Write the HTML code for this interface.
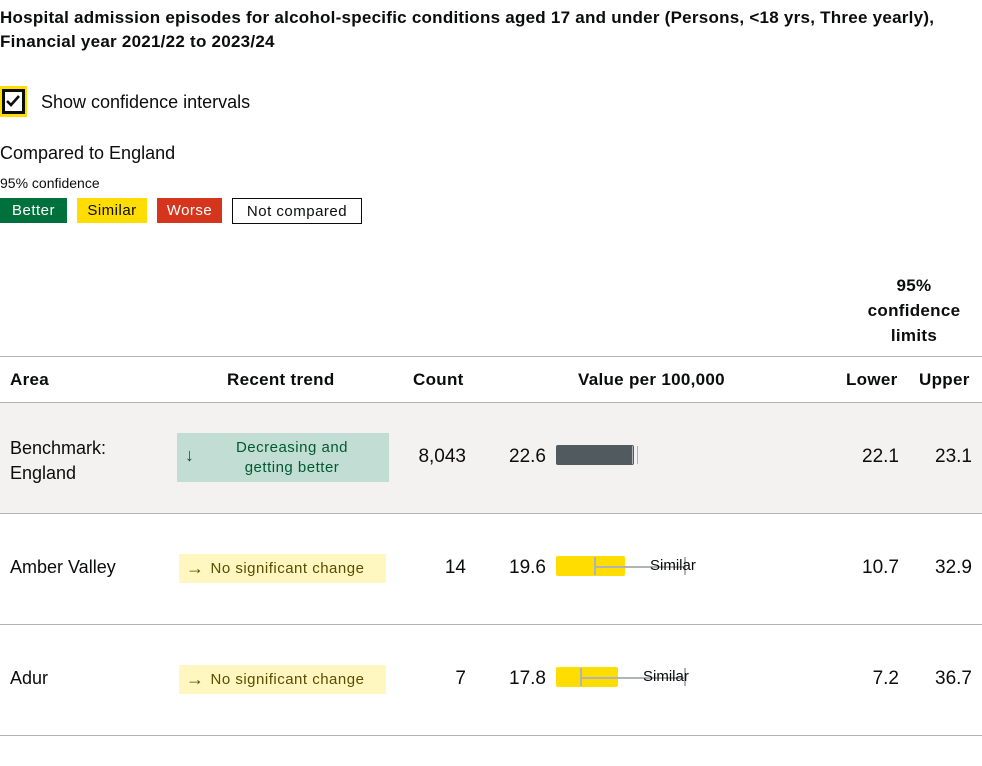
<!DOCTYPE html>
<html><head><meta charset="utf-8"><style>
body{margin:0;width:982px;height:766px;background:#fff;font-family:"Liberation Sans",Arial,sans-serif;color:#0b0c0c;position:relative;overflow:hidden}
.a{position:absolute;white-space:nowrap}
.line{position:absolute;left:0;width:982px;height:1px;background:#b1b4b6}
.tag{position:absolute;font-size:15px;letter-spacing:.5px;display:flex;align-items:center}
.r{text-align:right}
.h{font-weight:bold;font-size:17px;letter-spacing:.3px}
.n{font-size:19px}
.ar{font-size:18px;margin-right:6px}
</style></head><body>
<div class="a" style="left:0;top:6px;font-weight:bold;font-size:17px;line-height:24px;letter-spacing:.25px">Hospital admission episodes for alcohol-specific conditions aged 17 and under (Persons, &lt;18 yrs, Three yearly),<br>Financial year 2021/22 to 2023/24</div>
<div class="a" style="left:0;top:86px;width:27px;height:31px;background:#ffdd00"></div>
<div class="a" style="left:2px;top:89px;width:23px;height:25px;border:3px solid #0b0c0c;box-sizing:border-box;background:#fff"></div>
<svg class="a" style="left:3px;top:91px" width="20" height="20"><path d="M4 10 L8 14 L16 5" stroke="#0b0c0c" stroke-width="2.6" fill="none"/></svg>
<div class="a" style="left:41px;top:92px;font-size:18px">Show confidence intervals</div>
<div class="a" style="left:0;top:143px;font-size:18px">Compared to England</div>
<div class="a" style="left:0;top:175px;font-size:14px">95% confidence</div>
<div class="tag" style="left:0;top:198px;width:67px;height:25px;background:#00703c;color:#fff;justify-content:center">Better</div>
<div class="tag" style="left:77px;top:198px;width:70px;height:25px;background:#ffdd00;justify-content:center">Similar</div>
<div class="tag" style="left:157px;top:198px;width:65px;height:25px;background:#d4351c;color:#fff;justify-content:center">Worse</div>
<div class="tag" style="left:232px;top:198px;width:130px;height:26px;border:1px solid #0b0c0c;box-sizing:border-box;justify-content:center">Not compared</div>
<div class="a h" style="left:850px;top:273px;width:128px;text-align:center;line-height:25px;white-space:normal">95%<br>confidence<br>limits</div>
<div class="line" style="top:356px"></div>
<div class="a h" style="left:10px;top:370px">Area</div>
<div class="a h" style="left:227px;top:370px">Recent trend</div>
<div class="a h" style="left:413px;top:370px">Count</div>
<div class="a h" style="left:578px;top:370px">Value per 100,000</div>
<div class="a h" style="left:846px;top:370px">Lower</div>
<div class="a h" style="left:919px;top:370px">Upper</div>
<div class="line" style="top:402px"></div>
<div class="a" style="left:0;top:403px;width:982px;height:110px;background:#f3f2f1"></div>
<div class="a n" style="left:10px;top:436px;font-size:18px;line-height:25px">Benchmark:<br>England</div>
<div class="tag" style="left:177px;top:433px;width:212px;height:49px;background:#c2ded4;color:#005a30;"><span style="position:absolute;left:8px;top:12px;font-size:18px">↓</span><span style="position:absolute;left:0;width:230px;text-align:center;line-height:20px;top:5px">Decreasing and<br>getting better</span></div>
<div class="a n r" style="left:380px;top:446px;width:86px">8,043</div>
<div class="a n r" style="left:480px;top:446px;width:66px">22.6</div>
<div class="a" style="left:556px;top:445px;width:78px;height:20px;background:#505a5f;border-radius:2px"></div>
<div class="a" style="left:632px;top:446px;width:4px;height:18px;border-left:1px solid #b1b4b6;border-right:1px solid #b1b4b6"></div>
<div class="a n r" style="left:820px;top:446px;width:79px">22.1</div>
<div class="a n r" style="left:900px;top:446px;width:72px">23.1</div>
<div class="line" style="top:513px"></div>
<div class="a" style="left:10px;top:557px;font-size:18px">Amber Valley</div>
<div class="tag" style="left:179px;top:554px;width:207px;height:29px;background:#fff7bf;color:#594d00;padding-left:7px;box-sizing:border-box"><span class="ar">→</span>No significant change</div>
<div class="a n r" style="left:380px;top:557px;width:86px">14</div>
<div class="a n r" style="left:480px;top:557px;width:66px">19.6</div>
<div class="a" style="left:556px;top:556px;width:69px;height:20px;background:#ffdd00;border-radius:2px"></div>
<div class="a" style="left:594px;top:566px;width:91px;height:2px;background:#b1b4b6"></div>
<div class="a" style="left:594px;top:557px;width:2px;height:18px;background:#b1b4b6"></div>
<div class="a" style="left:684px;top:557px;width:2px;height:18px;background:#b1b4b6"></div>
<div class="a" style="left:650px;top:557px;font-size:15px">Similar</div>
<div class="a n r" style="left:820px;top:557px;width:79px">10.7</div>
<div class="a n r" style="left:900px;top:557px;width:72px">32.9</div>
<div class="line" style="top:624px"></div>
<div class="a" style="left:10px;top:668px;font-size:18px">Adur</div>
<div class="tag" style="left:179px;top:665px;width:207px;height:29px;background:#fff7bf;color:#594d00;padding-left:7px;box-sizing:border-box"><span class="ar">→</span>No significant change</div>
<div class="a n r" style="left:380px;top:668px;width:86px">7</div>
<div class="a n r" style="left:480px;top:668px;width:66px">17.8</div>
<div class="a" style="left:556px;top:667px;width:62px;height:20px;background:#ffdd00;border-radius:2px"></div>
<div class="a" style="left:580px;top:677px;width:105px;height:2px;background:#b1b4b6"></div>
<div class="a" style="left:580px;top:668px;width:2px;height:18px;background:#b1b4b6"></div>
<div class="a" style="left:684px;top:668px;width:2px;height:18px;background:#b1b4b6"></div>
<div class="a" style="left:643px;top:668px;font-size:15px">Similar</div>
<div class="a n r" style="left:820px;top:668px;width:79px">7.2</div>
<div class="a n r" style="left:900px;top:668px;width:72px">36.7</div>
<div class="line" style="top:735px"></div>
</body></html>
